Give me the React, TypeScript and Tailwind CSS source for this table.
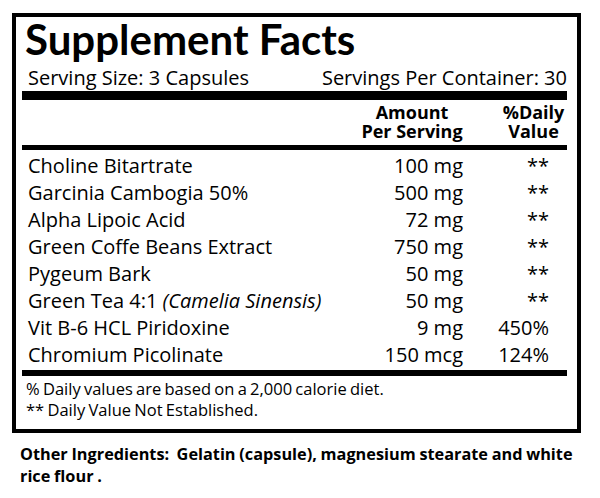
const ROWS: { name: string; note?: string; amount: string; dv: string }[] = [
  { name: 'Choline Bitartrate', amount: '100 mg', dv: '**' },
  { name: 'Garcinia Cambogia 50%', amount: '500 mg', dv: '**' },
  { name: 'Alpha Lipoic Acid', amount: '72 mg', dv: '**' },
  { name: 'Green Coffe Beans Extract', amount: '750 mg', dv: '**' },
  { name: 'Pygeum Bark', amount: '50 mg', dv: '**' },
  { name: 'Green Tea 4:1', note: '(Camelia Sinensis)', amount: '50 mg', dv: '**' },
  { name: 'Vit B-6 HCL Piridoxine', amount: '9 mg', dv: '450%' },
  { name: 'Chromium Picolinate', amount: '150 mcg', dv: '124%' },
]

export default function App() {
  return (
    <div className="w-[600px] h-[498px] bg-white text-black font-['Open_Sans','Noto_Sans',sans-serif] overflow-hidden">
      {/* Facts box */}
      <div className="ml-[12px] mt-[13px] w-[569px] h-[420px] border-4 border-black pl-[6px] pr-[10px]">
        <h1 className="pt-[1px] pl-[3px] h-[43px] font-['Lato',sans-serif] text-[42px] leading-[42px] font-bold">
          Supplement Facts
        </h1>

        <div className="flex justify-between pt-[6px] h-[31px] pl-[6px] text-[20px] leading-[24px]">
          <span>Serving Size: 3 Capsules</span>
          <span>Servings Per Container: 30</span>
        </div>

        <div className="h-[9px] bg-black" />

        {/* Column headers */}
        <div className="flex justify-end h-[45px] pt-[2.5px] text-[18px] leading-[19px] font-bold">
          <div className="w-[110px] text-center">
            Amount
            <br />
            Per Serving
          </div>
          <div className="w-[33px]" />
          <div className="w-[67px] text-center">
            %Daily
            <br />
            Value
          </div>
        </div>

        <div className="h-[5px] bg-black" />

        {/* Ingredient rows */}
        <div className="py-[2px]">
          {ROWS.map((r) => (
            <div key={r.name} className="flex h-[27px] text-[20px] leading-[27px]">
              <div className="flex-1 pl-[6px] whitespace-nowrap">
                {r.name}
                {r.note && <i> {r.note}</i>}
              </div>
              <div className="w-[120px] text-right whitespace-nowrap">{r.amount}</div>
              <div className="w-[104px] pr-[18px] text-right">{r.dv}</div>
            </div>
          ))}
        </div>

        <div className="h-[6px] bg-black" />

        {/* Footnotes */}
        <div className="pt-[2px] pl-[4px] text-[16.5px] leading-[21px] [word-spacing:-1px]">
          <p>% Daily values are based on a 2,000 calorie diet.</p>
          <p>** Daily Value Not Established.</p>
        </div>
      </div>

      {/* Other ingredients */}
      <p className="mt-[9.5px] pl-[20px] text-[16.3px] leading-[22px] font-bold whitespace-nowrap [word-spacing:-0.5px]">
        Other Ingredients:&nbsp; Gelatin (capsule), magnesium stearate and white
        <br />
        rice flour .
      </p>
    </div>
  )
}
